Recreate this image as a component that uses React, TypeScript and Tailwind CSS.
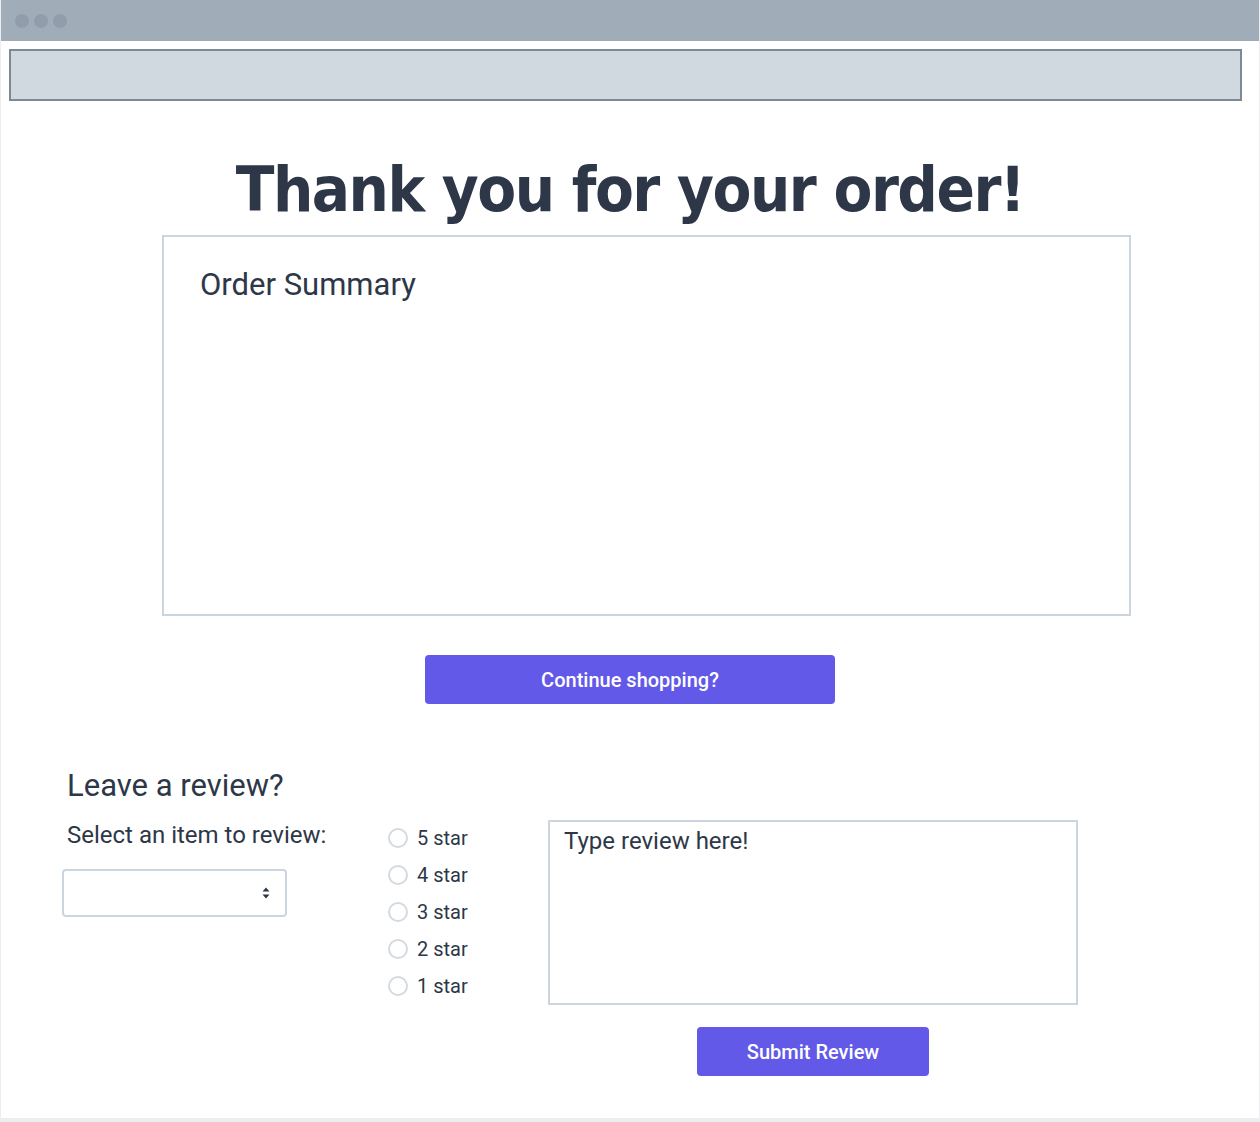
const ratings = ["5 star", "4 star", "3 star", "2 star", "1 star"];

function SelectArrows() {
  return (
    <svg width="8" height="12" viewBox="0 0 8 12" className="text-[#2d3748]">
      <path d="M4 0.5 L7.5 4.5 H0.5 Z" fill="currentColor" />
      <path d="M4 11.5 L7.5 7.5 H0.5 Z" fill="currentColor" />
    </svg>
  );
}

export default function App() {
  return (
    <div
      className="w-[1260px] h-[1122px] bg-white border-l border-r border-b-4 border-[#eceef1] flex flex-col text-[#2d3748]"
      style={{ fontFamily: "Roboto, 'Noto Sans', sans-serif" }}
    >
      {/* browser chrome */}
      <div className="h-[41px] bg-[#a0acb8] flex items-center gap-[5px] pl-[14px]">
        <span className="w-[14px] h-[14px] rounded-full bg-[#919dab]" />
        <span className="w-[14px] h-[14px] rounded-full bg-[#919dab]" />
        <span className="w-[14px] h-[14px] rounded-full bg-[#919dab]" />
      </div>
      <div className="mt-[8px] ml-[8px] w-[1233px] h-[52px] bg-[#d0d8e0] border-2 border-[#7e8996]" />

      {/* confirmation */}
      <h1
        className="mt-[54px] text-center text-[63px] leading-[70px] font-bold tracking-[-1.5px]"
        style={{ fontFamily: "'DejaVu Sans Condensed', 'DejaVu Sans', sans-serif" }}
      >
        Thank you for your order!
      </h1>
      <div className="mt-[10px] ml-[161px] w-[969px] h-[381px] border-2 border-[#cbd5e0] pt-[31px] pl-[36px]">
        <h2 className="text-[31px] leading-[34px]">Order Summary</h2>
      </div>
      <div className="flex justify-center mt-[39px]">
        <button className="w-[410px] h-[49px] rounded-[4px] bg-[#6259e9] text-white text-[20px] font-medium">
          Continue shopping?
        </button>
      </div>

      {/* review */}
      <div className="mt-[64px] pl-[61px]">
        <h3 className="ml-[5px] text-[31px] leading-[36px]">Leave a review?</h3>
        <div className="mt-[16px] flex">
          <div className="w-[326px]">
            <p className="ml-[5px] text-[24px] leading-[30px]">Select an item to review:</p>
            <div className="mt-[19px] w-[225px] h-[48px] rounded-[4px] border-2 border-[#cbd5e0] flex items-center justify-end pr-[15px]">
              <SelectArrows />
            </div>
          </div>
          <div className="w-[160px] -mt-[1px] flex flex-col">
            {ratings.map((r) => (
              <label key={r} className="h-[37px] flex items-center gap-[9px]">
                <span className="w-[20px] h-[20px] rounded-full border-2 border-[#d3dae2] bg-white" />
                <span className="text-[20px]">{r}</span>
              </label>
            ))}
          </div>
          <div className="flex flex-col items-center">
            <div className="w-[530px] h-[185px] border-2 border-[#cbd5e0] px-[14px] pt-[3px] text-[24px] leading-[32px]">
              Type review here!
            </div>
            <button className="mt-[22px] w-[232px] h-[49px] rounded-[4px] bg-[#6259e9] text-white text-[20px] font-medium">
              Submit Review
            </button>
          </div>
        </div>
      </div>
    </div>
  );
}
